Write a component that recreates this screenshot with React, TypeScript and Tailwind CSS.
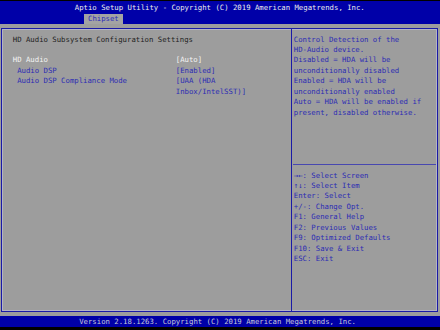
export default function App() {
  const help = [
    "Control Detection of the",
    "HD-Audio device.",
    "Disabled = HDA will be",
    "unconditionally disabled",
    "Enabled = HDA will be",
    "unconditionally enabled",
    "Auto = HDA will be enabled if",
    "present, disabled otherwise.",
  ];
  const keys = [
    "\u2192\u2190: Select Screen",
    "\u2191\u2193: Select Item",
    "Enter: Select",
    "+/-: Change Opt.",
    "F1: General Help",
    "F2: Previous Values",
    "F9: Optimized Defaults",
    "F10: Save & Exit",
    "ESC: Exit",
  ];
  return (
    <div className="w-[440px] h-[330px] bg-black flex flex-col font-['DejaVu_Sans_Mono',monospace] text-[7.3px] leading-[10.45px] whitespace-pre overflow-hidden">
      <div className="mt-[1px] h-[23px] bg-[#0000a8] flex flex-col">
        <div className="mt-[2px] h-[10.45px] pl-[74.8px] text-[#ececec]">
          Aptio Setup Utility - Copyright (C) 2019 American Megatrends, Inc.
        </div>
        <div className="flex pl-[83.6px] mt-[0.5px]">
          <div className="h-[10.05px] px-[4.4px] bg-[#a3a3a3] text-[#2a2ab8]">Chipset</div>
        </div>
      </div>
      <div className="h-[292px] bg-[#9d9d9d] pt-[4px] pl-[1px]">
        <div className="w-[437px] h-[284px] border border-[#1a1aa6] shadow-[inset_1px_1px_0_#b4b4c4,inset_-1px_-1px_0_#b4b4c4] flex">
          <div className="w-[290px] border-r border-[#1a1aa6] pt-[5.5px] pl-[10.8px] flex flex-col">
            <div className="text-[#222222]">HD Audio Subsystem Configuration Settings</div>
            <div className="h-[10.45px]" />
            <div className="flex">
              <div className="w-[163px] text-[#f4f4f4]">HD Audio</div>
              <div className="text-[#f4f4f4]">[Auto]</div>
            </div>
            <div className="flex">
              <div className="w-[163px] pl-[4.4px] text-[#2c2cb4]">Audio DSP</div>
              <div className="text-[#2c2cb4]">[Enabled]</div>
            </div>
            <div className="flex">
              <div className="w-[163px] pl-[4.4px] text-[#2c2cb4]">Audio DSP Compliance Mode</div>
              <div className="text-[#2c2cb4] flex flex-col">
                <span>[UAA (HDA</span>
                <span>Inbox/IntelSST)]</span>
              </div>
            </div>
          </div>
          <div className="flex-1 flex flex-col text-[#2c2cb4]">
            <div className="h-[135px] pt-[5.5px] pl-[1.8px] flex flex-col">
              {help.map((l) => (
                <div key={l}>{l}</div>
              ))}
            </div>
            <div className="h-[1px] ml-[1px] mr-[1px] bg-[#4848b0]" />
            <div className="pt-[5.5px] pl-[1.8px] flex flex-col">
              {keys.map((l) => (
                <div key={l}>{l}</div>
              ))}
            </div>
          </div>
        </div>
      </div>
      <div className="h-[11px] bg-[#0000a8] pl-[79.2px] text-[#c8c8d8] leading-[11px]">
        Version 2.18.1263. Copyright (C) 2019 American Megatrends, Inc.
      </div>
    </div>
  );
}
